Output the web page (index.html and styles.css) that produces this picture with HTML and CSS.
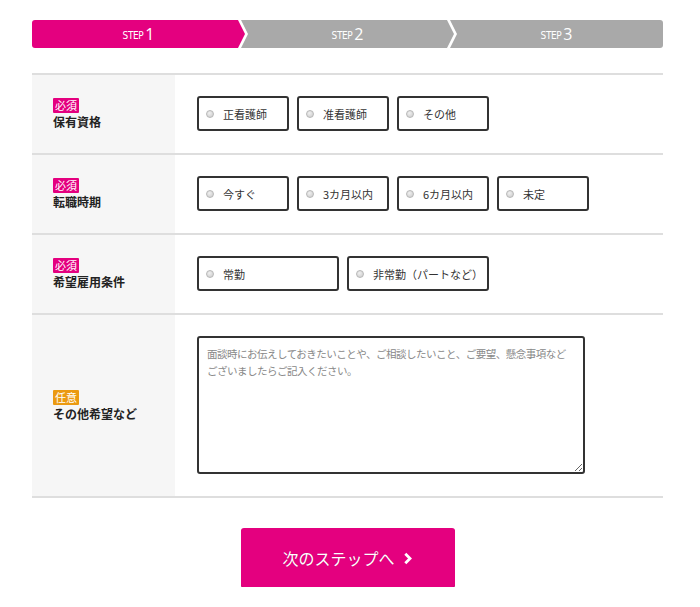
FILE: index.html
```html
<!DOCTYPE html>
<html lang="ja">
<head>
  <meta charset="UTF-8">
  <meta name="viewport" content="width=device-width, initial-scale=1.0">
  <title>エントリーフォーム STEP1</title>
  <link rel="stylesheet" href="styles.css">
</head>
<body>
  <div class="entry">
    <ol class="steps">
      <li class="step current"><span class="step-word">STEP</span><span class="step-num">1</span></li>
      <li class="step"><span class="step-word">STEP</span><span class="step-num">2</span></li>
      <li class="step last"><span class="step-word">STEP</span><span class="step-num">3</span></li>
    </ol>

    <div class="form-table">
      <div class="row">
        <div class="head"><span class="badge">必須</span><span class="label">保有資格</span></div>
        <div class="body">
          <label class="choice"><input type="radio" name="license"><span>正看護師</span></label>
          <label class="choice"><input type="radio" name="license"><span>准看護師</span></label>
          <label class="choice"><input type="radio" name="license"><span>その他</span></label>
        </div>
      </div>
      <div class="row">
        <div class="head"><span class="badge">必須</span><span class="label">転職時期</span></div>
        <div class="body">
          <label class="choice"><input type="radio" name="timing"><span>今すぐ</span></label>
          <label class="choice"><input type="radio" name="timing"><span>3カ月以内</span></label>
          <label class="choice"><input type="radio" name="timing"><span>6カ月以内</span></label>
          <label class="choice"><input type="radio" name="timing"><span>未定</span></label>
        </div>
      </div>
      <div class="row">
        <div class="head"><span class="badge">必須</span><span class="label">希望雇用条件</span></div>
        <div class="body">
          <label class="choice wide"><input type="radio" name="employ"><span>常勤</span></label>
          <label class="choice wide"><input type="radio" name="employ"><span>非常勤（パートなど）</span></label>
        </div>
      </div>
      <div class="row">
        <div class="head"><span class="badge optional">任意</span><span class="label">その他希望など</span></div>
        <div class="body">
          <textarea class="memo" placeholder="面談時にお伝えしておきたいことや、ご相談したいこと、ご要望、懸念事項などございましたらご記入ください。"></textarea>
        </div>
      </div>
    </div>

    <div class="actions">
      <button type="button" class="next">次のステップへ
        <svg class="chev" width="10" height="13" viewBox="0 0 10 13"><path d="M2.3 1.8 L7 6.5 L2.3 11.2" fill="none" stroke="#fff" stroke-width="2.8"/></svg>
      </button>
    </div>
  </div>
</body>
</html>
```

FILE: styles.css
```css
body { margin: 0; background: #fff; font-family: "Noto Sans CJK JP", "Noto Sans", sans-serif; color: #333; }
.entry { width: 631px; margin-left: 32px; padding-top: 20px; }

.steps { display: flex; margin: 0; padding: 0; list-style: none; height: 28px; }
.step { flex: 1; display: flex; align-items: center; justify-content: center; background: #a9a9a9; color: #fff; margin-left: -4px;
  clip-path: polygon(0 0, calc(100% - 7px) 0, 100% 50%, calc(100% - 7px) 100%, 0 100%, 7px 50%); }
.step.current { background: #e4007f; margin-left: 0; border-radius: 3px 0 0 3px;
  clip-path: polygon(0 0, calc(100% - 7px) 0, 100% 50%, calc(100% - 7px) 100%, 0 100%); }
.step.last { border-radius: 0 3px 3px 0; clip-path: polygon(0 0, 100% 0, 100% 100%, 0 100%, 7px 50%); }
.step-word { font-family: "DejaVu Sans", sans-serif; font-stretch: condensed; font-size: 10px; letter-spacing: -0.4px; margin-top: 3px; }
.step-num { font-family: "Open Sans", sans-serif; font-size: 16px; margin-left: 2px; }

.form-table { margin-top: 25px; border-bottom: 2px solid #dedede; }
.row { display: flex; border-top: 2px solid #dedede; }
.head { width: 122px; padding-left: 21px; background: #f6f6f6; display: flex; flex-direction: column; justify-content: center; align-items: flex-start; }
.badge { background: #e4007f; color: #fff; font-size: 11px; line-height: 15px; padding: 0 2px; border-radius: 1px; margin-bottom: 1px; }
.badge.optional { background: #eb9a11; }
.label { font-size: 12px; font-weight: bold; line-height: 16px; color: #222; }
.body { flex: 1; display: flex; gap: 8px; padding: 21px 22px 22px; }

.choice { width: 92px; height: 35px; box-sizing: border-box; border: 2px solid #333; border-radius: 3px; display: flex; align-items: center; padding-left: 7px; font-size: 11px; color: #333; }
.choice.wide { width: 142px; }
.choice input { appearance: none; width: 8px; height: 8px; margin: 0 9px 0 0; border-radius: 50%; background: radial-gradient(circle at 40% 35%, #f0f0f0, #c8c8c8); border: 1px solid #b8b8b8; box-sizing: border-box; }

.memo { width: 388px; height: 138px; box-sizing: border-box; border: 2px solid #333; border-radius: 3px; padding: 7px 8px; font-family: inherit; font-size: 10.5px; letter-spacing: -0.5px; line-height: 17px; resize: vertical; }
.memo::placeholder { color: #888; }

.actions { display: flex; justify-content: center; padding-top: 30px; }
.next { width: 214px; height: 59px; background: #e4007f; color: #fff; border: none; border-radius: 3px; font-family: inherit; font-size: 16px; display: flex; align-items: center; justify-content: center; gap: 8px; text-shadow: 0 0 1px rgba(0,0,0,0.2); box-shadow: 0 1px 0 #b8006a; cursor: pointer; }
.chev { margin-top: 1px; }
```
